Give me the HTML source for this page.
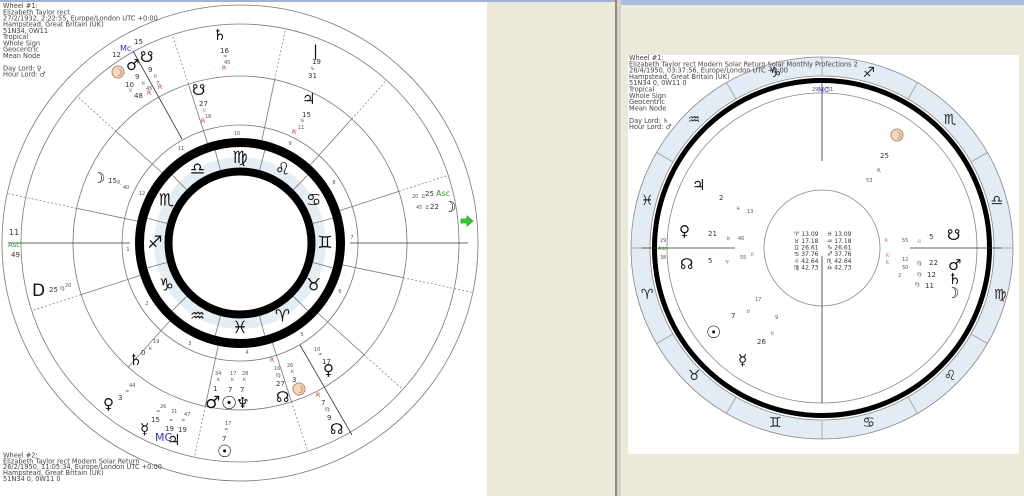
<!DOCTYPE html>
<html><head><meta charset="utf-8"><style>
html,body{margin:0;padding:0;width:1024px;height:496px;overflow:hidden;background:#ece9d8}
svg{position:absolute;left:0;top:0}
text{font-family:"DejaVu Sans","Liberation Sans",sans-serif}
.t{font-size:6.6px;fill:#444;font-family:"DejaVu Sans",sans-serif}
.n{font-size:7px;fill:#333}
.s{font-size:5px;fill:#555}
.r{font-size:6px;fill:#c33}
.g{font-size:15px;fill:#111}
.z{font-size:17px;fill:#111;text-anchor:middle;dominant-baseline:central}
.zr{font-size:14px;fill:#222;text-anchor:middle;dominant-baseline:central}
</style></head><body>
<svg width="1024" height="496" viewBox="0 0 1024 496">
<rect x="0" y="0" width="487" height="496" fill="#fff"/>
<rect x="0" y="0" width="615" height="2" fill="#9db4d6"/>
<rect x="615" y="0" width="2" height="496" fill="#8a8a80"/>
<rect x="617" y="0" width="4" height="496" fill="#d6d3c6"/>
<rect x="621" y="0" width="403" height="5" fill="#a9bfdf"/>
<rect x="628" y="55" width="391" height="399" fill="#fff"/>

<!-- LEFT CHART -->
<g transform="translate(240,243)" fill="none" stroke="#777" stroke-width="0.8">
<circle r="238"/><circle r="219"/><circle r="167"/><circle r="118"/>
<circle r="86" fill="#e6eef5" stroke="none"/>
<circle r="71" fill="#fff" stroke="none"/>
<circle r="100.5" stroke="#000" stroke-width="9"/>
<circle r="71.5" stroke="#000" stroke-width="8"/>
<g stroke="#777">
<line x1="75" x2="96" transform="rotate(-15)"/><line x1="75" x2="96" transform="rotate(-45)"/><line x1="75" x2="96" transform="rotate(-75)"/><line x1="75" x2="96" transform="rotate(-105)"/><line x1="75" x2="96" transform="rotate(-135)"/><line x1="75" x2="96" transform="rotate(-165)"/><line x1="75" x2="96" transform="rotate(-195)"/><line x1="75" x2="96" transform="rotate(-225)"/><line x1="75" x2="96" transform="rotate(-255)"/><line x1="75" x2="96" transform="rotate(-285)"/><line x1="75" x2="96" transform="rotate(-315)"/><line x1="75" x2="96" transform="rotate(-345)"/>
</g>
<g>
<line x1="105" x2="167" transform="rotate(-18)"/><line x1="105" x2="167" transform="rotate(-48)"/><line x1="105" x2="167" transform="rotate(-78)"/><line x1="105" x2="167" transform="rotate(-108)"/><line x1="105" x2="167" transform="rotate(-138)"/><line x1="105" x2="167" transform="rotate(-168)"/><line x1="105" x2="167" transform="rotate(-198)"/><line x1="105" x2="167" transform="rotate(-228)"/><line x1="105" x2="167" transform="rotate(-258)"/><line x1="105" x2="167" transform="rotate(-288)"/><line x1="105" x2="167" transform="rotate(-318)"/><line x1="105" x2="167" transform="rotate(-348)"/>
</g>
<g stroke-dasharray="2,2" stroke="#888">
<line x1="167" x2="219" transform="rotate(-18)"/><line x1="167" x2="219" transform="rotate(-48)"/><line x1="167" x2="219" transform="rotate(-78)"/><line x1="167" x2="219" transform="rotate(-108)"/><line x1="167" x2="219" transform="rotate(-138)"/><line x1="167" x2="238" transform="rotate(-168)"/><line x1="167" x2="219" transform="rotate(-198)"/><line x1="167" x2="219" transform="rotate(-258)"/><line x1="167" x2="219" transform="rotate(-288)"/><line x1="167" x2="219" transform="rotate(-318)"/><line x1="167" x2="238" transform="rotate(-348)"/>
</g>
<line x1="-232" y1="0" x2="-110" y2="0" stroke="#333"/>
<line x1="110" y1="0" x2="228" y2="0" stroke="#333"/>
<line x1="-58" y1="-104" x2="-107" y2="-192" stroke="#333"/>
<line x1="60" y1="102" x2="112" y2="192" stroke="#333"/>
</g>
<g transform="translate(240,243)" class="s" style="font-size:5px;fill:#555;text-anchor:middle">
<text x="-3" y="-108">10</text><text x="50" y="-98">9</text><text x="94" y="-59">8</text><text x="112" y="-4">7</text><text x="-112" y="8">1</text><text x="-98" y="-48">12</text><text x="-59" y="-93">11</text><text x="-93" y="62">2</text><text x="-50" y="102">3</text><text x="7" y="111">4</text><text x="62" y="93">5</text><text x="100" y="50">6</text>
</g>
<g class="z">
<text x="325" y="243">♊</text><text x="313.6" y="200.5">♋</text><text x="282.5" y="169.4">♌</text><text x="240" y="158">♍</text><text x="197.5" y="169.4">♎</text><text x="166.4" y="200.5">♏</text><text x="155" y="243">♐</text><text x="166.4" y="285.5">♑</text><text x="197.5" y="316.6">♒</text><text x="240" y="328">♓</text><text x="282.5" y="316.6">♈</text><text x="313.6" y="285.5">♉</text>
</g>

<!-- left planets -->
<g>
<text class="n" x="134" y="44">15</text><text x="120" y="51" style="font-size:8px;fill:#33c">Mc</text><text class="n" x="112" y="57">12</text>
<text class="g" x="126" y="70">♂</text><text class="g" x="140" y="62">☋</text>
<circle cx="118" cy="72" r="6" fill="#f3d9bf" stroke="#b86" stroke-width="1"/><text x="114" y="76" style="font-size:10px;fill:#a63">☽</text>
<text class="n" x="148" y="72">9</text><text class="n" x="135" y="79">9</text><text class="s" x="153" y="78">♉</text><text class="s" x="141" y="85">♉</text><text class="n" x="125" y="87">10</text><text class="s" x="156" y="85">7</text><text class="r" x="158" y="89">R</text><text class="s" x="146" y="90">45</text><text class="r" x="147" y="95">R</text><text class="n" x="134" y="98">48</text><text class="s" x="128" y="92">♉</text>
<text class="g" x="213" y="40">♄</text><text class="n" x="220" y="53">16</text><text class="s" x="223" y="58">♒</text><text class="s" x="224" y="64">45</text><text class="r" x="222" y="70">R</text>
<text x="313" y="56" style="font-size:15px;fill:#111">|</text><text class="n" x="312" y="64">19</text><text class="s" x="310" y="70">♑</text><text class="n" x="308" y="78">31</text>
<text class="g" x="192" y="95">☋</text><text class="n" x="199" y="106">27</text><text class="s" x="202" y="112">♌</text><text class="s" x="205" y="118">16</text><text class="r" x="201" y="123">R</text>
<text class="g" x="302" y="104">♃</text><text class="n" x="302" y="117">15</text><text class="s" x="300" y="122">♋</text><text class="s" x="298" y="129">11</text><text class="r" x="292" y="134">R</text>
<text class="g" x="92" y="183">☽</text><text class="n" x="108" y="183">15</text><text class="s" x="117" y="184">♏</text><text class="s" x="123" y="189">40</text>
<text class="s" x="412" y="198">20</text><text class="s" x="421" y="198">♊</text><text class="n" x="425" y="196">25</text><text x="436" y="196" style="font-size:8px;fill:#393">Asc</text>
<text class="s" x="416" y="209">45</text><text class="s" x="425" y="209">♊</text><text class="n" x="430" y="209">22</text><text class="g" x="443" y="212">☽</text>
<path d="M461 219h6v-3l6 5-6 5v-3h-6z" fill="#3c3" stroke="#393" stroke-width="0.8"/>
<text class="n" x="9" y="235" style="font-size:8px">11</text><text x="8" y="247" style="font-size:7px;fill:#393">Asc</text><text class="n" x="11" y="257">49</text>
<text x="32" y="296" style="font-size:17px;fill:#111">D</text><text class="n" x="49" y="292">25</text><text class="s" x="60" y="290">♍</text><text class="s" x="65" y="287">20</text>
<text class="g" x="129" y="365">♄</text><text class="n" x="141" y="355">0</text><text class="s" x="148" y="350">♓</text><text class="s" x="153" y="343">19</text>
<text class="g" x="103" y="409">♀</text><text class="n" x="118" y="400">3</text><text class="s" x="125" y="393">♒</text><text class="s" x="129" y="387">44</text>
<text class="g" x="140" y="434">☿</text><text class="n" x="151" y="422">15</text><text class="s" x="156" y="413">♒</text><text class="s" x="160" y="408">26</text><text class="n" x="165" y="431">19</text><text class="s" x="169" y="422">♒</text><text class="s" x="171" y="413">31</text><text class="n" x="178" y="432">19</text><text class="s" x="181" y="422">♒</text><text class="s" x="184" y="416">47</text>
<text x="155" y="441" style="font-size:11px;fill:#33c">MC</text><text class="g" x="167" y="445">♃</text>
<text class="s" x="215" y="375">34</text><text class="s" x="230" y="375">17</text><text class="s" x="242" y="375">28</text><text class="s" x="216" y="381">♓</text><text class="s" x="230" y="381">♓</text><text class="s" x="242" y="381">♓</text>
<text class="n" x="213" y="391">1</text><text class="n" x="228" y="392">7</text><text class="n" x="240" y="392">7</text>
<text class="g" x="205" y="408" style="font-size:17px">♂</text><text class="g" x="221" y="409" style="font-size:18px">☉</text><text class="g" x="236" y="408">♆</text>
<text class="s" x="225" y="425">17</text><text class="s" x="224" y="431">♒</text><text class="n" x="222" y="441">7</text><text class="g" x="217" y="457" style="font-size:17px">☉</text>
<text class="r" x="270" y="362">R</text><text class="s" x="274" y="370">16</text><text class="s" x="287" y="367">26</text><text class="s" x="276" y="377">♍</text><text class="s" x="290" y="373">♓</text><text class="n" x="276" y="386">27</text><text class="n" x="292" y="382">3</text><text class="g" x="276" y="402">☊</text>
<circle cx="299" cy="389" r="6" fill="#f3d9bf" stroke="#b86" stroke-width="1"/><text x="295" y="393" style="font-size:10px;fill:#a63">☽</text>
<text class="s" x="314" y="351">10</text><text class="s" x="318" y="356">♒</text><text class="n" x="322" y="364">17</text><text class="g" x="323" y="375">♀</text>
<text class="r" x="316" y="397">R</text><text class="n" x="321" y="405">7</text><text class="s" x="325" y="411">♍</text><text class="n" x="327" y="420">9</text><text class="g" x="330" y="434">☊</text>
</g>

<!-- left info text -->
<g class="t">
<text x="3" y="8">Wheel #1:</text><text x="3" y="14.3">Elizabeth Taylor rect</text><text x="3" y="20.5">27/2/1932, 2:22:55, Europe/London UTC +0:00</text><text x="3" y="26.7">Hampstead, Great Britain (UK)</text><text x="3" y="33">51N34, 0W11</text><text x="3" y="39.2">Tropical</text><text x="3" y="45.4">Whole Sign</text><text x="3" y="51.6">Geocentric</text><text x="3" y="57.8">Mean Node</text><text x="3" y="70.3">Day Lord: ♀</text><text x="3" y="76.5">Hour Lord: ♂</text>
<text x="3" y="457.5">Wheel #2:</text><text x="3" y="463.3">Elizabeth Taylor rect Modern Solar Return</text><text x="3" y="469">26/2/1950, 11:05:34, Europe/London UTC +0:00</text><text x="3" y="474.8">Hampstead, Great Britain (UK)</text><text x="3" y="481">51N34 0, 0W11 0</text>
</g>

<!-- RIGHT CHART -->
<g transform="translate(822,248)" fill="none" stroke="#888" stroke-width="0.8">
<circle r="181.5" stroke="#e3ebf4" stroke-width="19"/>
<circle r="191"/><circle r="172"/>
<circle r="167.5" stroke="#000" stroke-width="5"/>
<circle r="155"/><circle r="58"/>
<g stroke="#999">
<line x1="172" x2="191"/><line x1="172" x2="191" transform="rotate(-30)"/><line x1="172" x2="191" transform="rotate(-60)"/><line x1="172" x2="191" transform="rotate(-90)"/><line x1="172" x2="191" transform="rotate(-120)"/><line x1="172" x2="191" transform="rotate(-150)"/><line x1="172" x2="191" transform="rotate(-180)"/><line x1="172" x2="191" transform="rotate(-210)"/><line x1="172" x2="191" transform="rotate(-240)"/><line x1="172" x2="191" transform="rotate(-270)"/><line x1="172" x2="191" transform="rotate(-300)"/><line x1="172" x2="191" transform="rotate(-330)"/>
</g>
<line x1="-180" y1="0" x2="-87" y2="0" stroke="#333"/><line x1="88" y1="0" x2="180" y2="0" stroke="#333"/>
<line x1="0" y1="-165" x2="0" y2="-87" stroke="#333"/><line x1="0" y1="8" x2="0" y2="155" stroke="#333"/>
</g>
<g class="zr">
<text x="868.8" y="73.2">♐</text><text x="775.2" y="73.2">♑</text><text x="694" y="120">♒</text><text x="647.2" y="201.2">♓</text><text x="647.2" y="294.8">♈</text><text x="694" y="376">♉</text><text x="775.2" y="422.8">♊</text><text x="868.8" y="422.8">♋</text><text x="950" y="376">♌</text><text x="1000" y="294.8">♍</text><text x="996.8" y="201.2">♎</text><text x="950" y="120">♏</text>
</g>
<g>
<text class="s" x="812" y="91">29</text><text x="818" y="92" style="font-size:7px;fill:#33c">MC</text><text class="s" x="827" y="91">51</text>
<circle cx="897" cy="135" r="6" fill="#f3d9bf" stroke="#b86" stroke-width="1"/><text x="893" y="139" style="font-size:10px;fill:#a63">☽</text>
<text class="n" x="880" y="158">25</text><text class="s" x="877" y="172">♏</text><text class="s" x="866" y="182">53</text>
<text class="g" x="692" y="190">♃</text><text class="n" x="719" y="200">2</text><text class="s" x="736" y="210">♓</text><text class="s" x="747" y="213">13</text>
<text class="g" x="679" y="236">♀</text><text class="n" x="708" y="236">21</text><text class="s" x="726" y="240">♓</text><text class="s" x="738" y="240">46</text>
<text class="s" x="660" y="242">29</text><text x="658" y="250" style="font-size:5px;fill:#393">Asc</text><text class="s" x="660" y="259">38</text>
<text class="r" x="885" y="242" style="font-size:4px">R</text><text class="s" x="902" y="242">55</text><text class="s" x="917" y="243">♌</text><text class="n" x="929" y="239">5</text><text class="g" x="947" y="240">☋</text>
<text class="g" x="680" y="269">☊</text><text class="n" x="708" y="263">5</text><text class="s" x="725" y="264">♈</text><text class="s" x="740" y="259">55</text><text class="r" x="751" y="256" style="font-size:4px">R</text>
<text class="r" x="886" y="257" style="font-size:4px">R</text><text class="r" x="886" y="264" style="font-size:4px">R</text><text class="s" x="902" y="261">12</text><text class="s" x="902" y="269">50</text><text class="s" x="898" y="277">2</text>
<text class="s" x="917" y="265">♍</text><text class="n" x="929" y="265">22</text><text class="s" x="917" y="276">♍</text><text class="n" x="927" y="277">12</text><text class="s" x="915" y="286">♍</text><text class="n" x="925" y="288">11</text>
<text class="g" x="948" y="270">♂</text><text class="g" x="948" y="284">♄</text><text class="g" x="946" y="298">☽</text>
<text class="s" x="755" y="301">17</text><text class="n" x="731" y="318">7</text><text class="s" x="746" y="313">♉</text><text class="s" x="775" y="319">9</text><text class="g" x="706" y="338" style="font-size:17px">☉</text><text class="s" x="770" y="335">♉</text><text class="n" x="757" y="344">26</text><text class="g" x="738" y="365">☿</text>
</g>
<g style="font-size:6px;fill:#333;font-family:'DejaVu Sans',sans-serif">
<text x="794" y="236">♈ 13.09</text><text x="827" y="236">♓ 13.09</text>
<text x="794" y="243">♉ 17.18</text><text x="827" y="243">♒ 17.18</text>
<text x="794" y="249.5">♊ 26.61</text><text x="827" y="249.5">♑ 26.61</text>
<text x="794" y="256">♋ 37.76</text><text x="827" y="256">♐ 37.76</text>
<text x="794" y="263">♌ 42.64</text><text x="827" y="263">♏ 42.64</text>
<text x="794" y="269.5">♍ 42.73</text><text x="827" y="269.5">♎ 42.73</text>
</g>
<g class="t">
<text x="629" y="60">Wheel #1:</text><text x="629" y="66.3">Elizabeth Taylor rect Modern Solar Return Solar Monthly Profections 2</text><text x="629" y="72.6">28/4/1950, 03:37:56, Europe/London UTC +0:00</text><text x="629" y="78.9">Hampstead, Great Britain (UK)</text><text x="629" y="85.2">51N34 0, 0W11 0</text><text x="629" y="91.5">Tropical</text><text x="629" y="97.8">Whole Sign</text><text x="629" y="104.1">Geocentric</text><text x="629" y="110.4">Mean Node</text><text x="629" y="122.8">Day Lord: ♄</text><text x="629" y="129.1">Hour Lord: ♂</text>
</g>
</svg>
</body></html>
